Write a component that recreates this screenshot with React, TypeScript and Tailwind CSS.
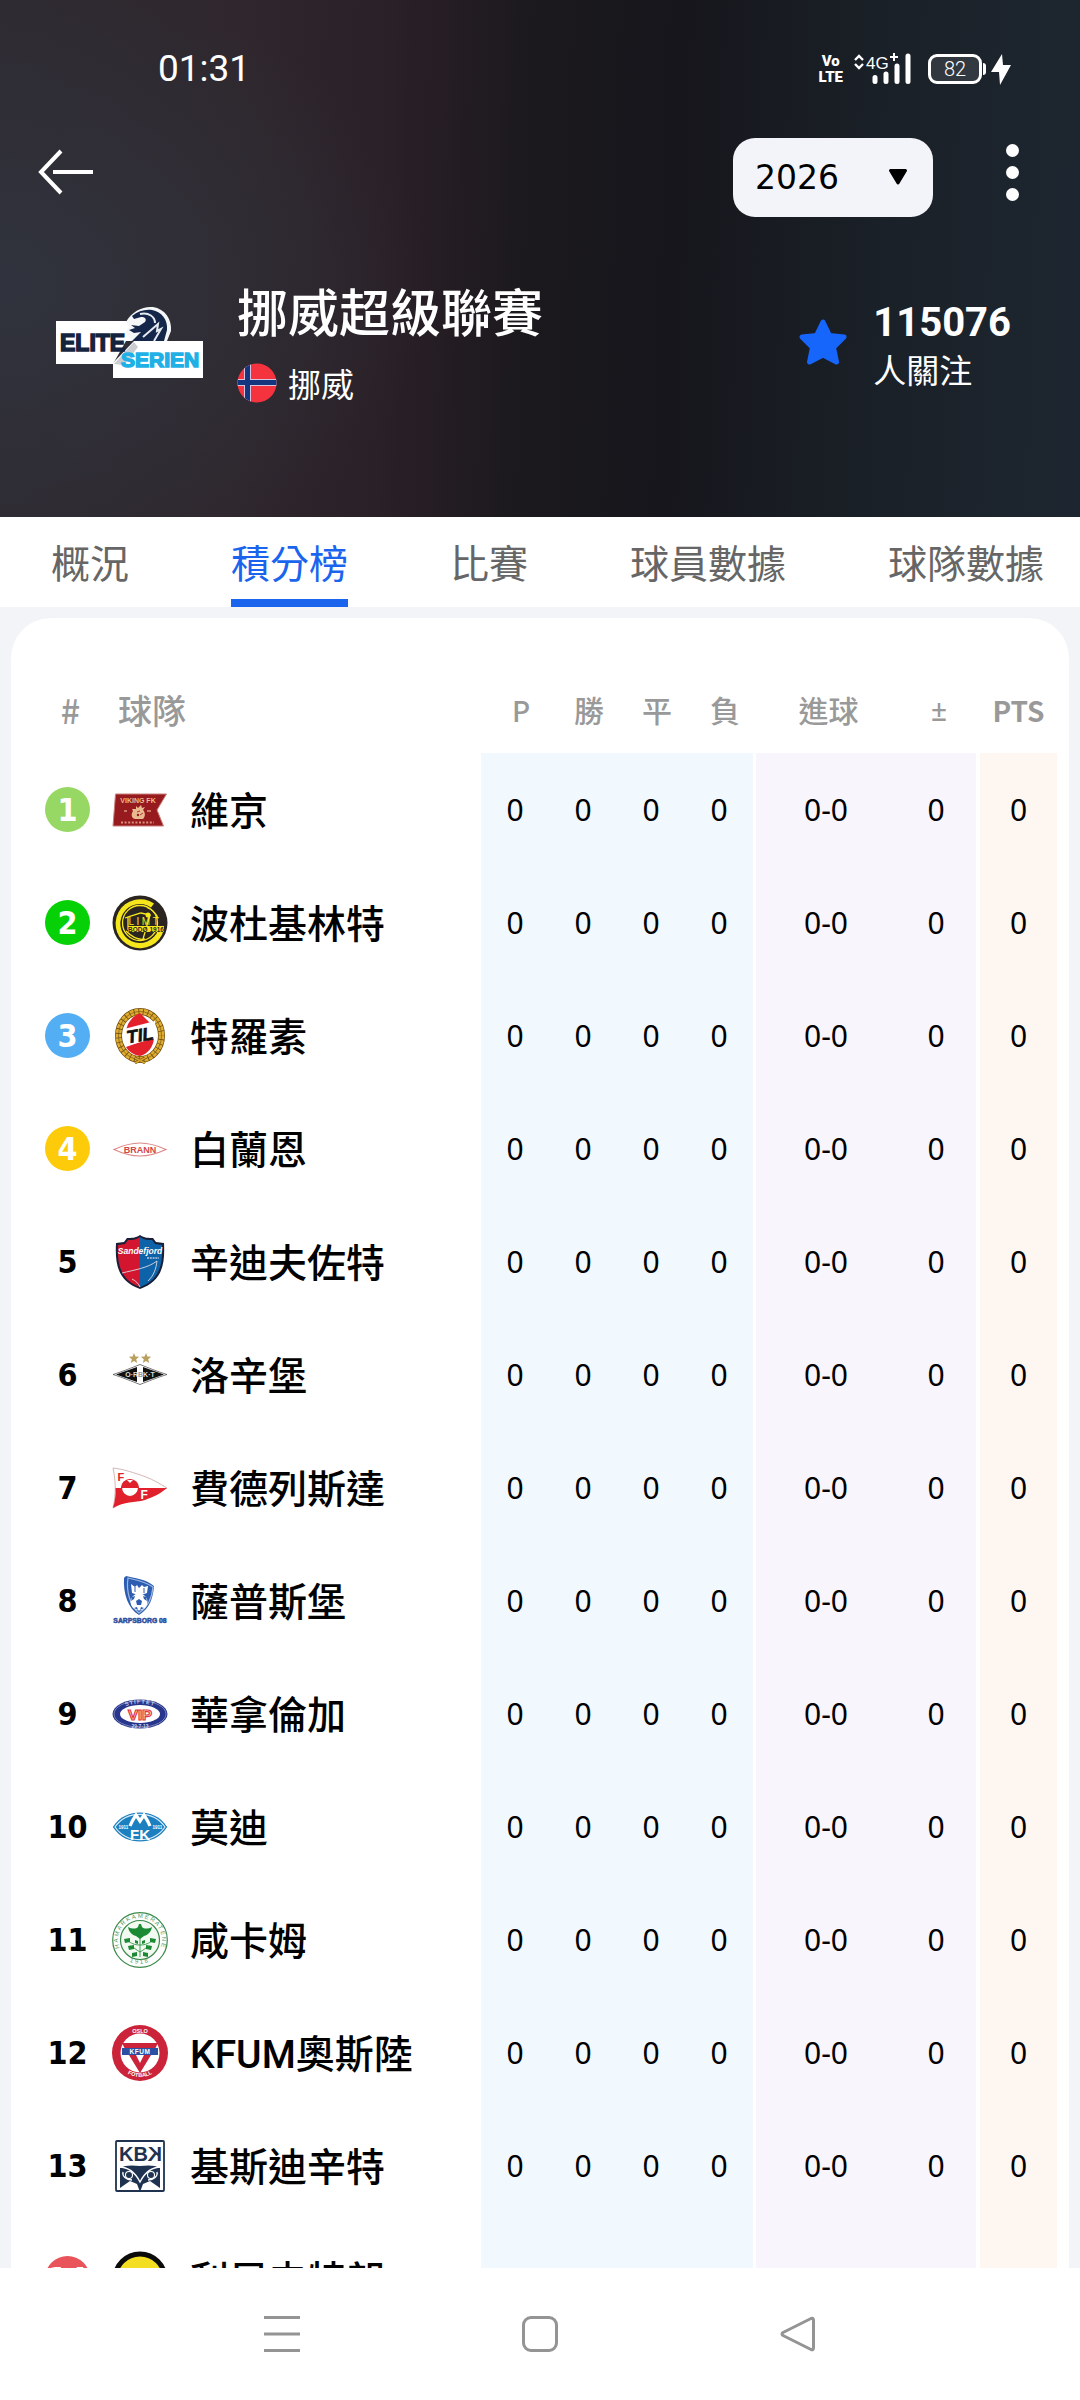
import { useState } from 'react';
import type { ReactNode } from 'react';

interface Team {
  rank: number;
  name: string;
  badge?: string;
  Logo: () => ReactNode;
}

const TABS = ['概況', '積分榜', '比賽', '球員數據', '球隊數據'];

const SVG_FONT = '"Liberation Sans", sans-serif';

/* ---------- club logos, all on a 56x56 grid ---------- */

function VikingLogo() {
  return (
    <svg viewBox="0 0 56 56" className="size-14" aria-hidden="true">
      <path d="M3.500 12H54.500L45 28l6.500 16H1Z" fill="#971b1e" stroke="#c9807a" strokeWidth="1" />
      <text x="26" y="20.500" textAnchor="middle" fontSize="7" fontWeight="bold" fill="#e9b98f" fontFamily={SVG_FONT}>VIKING FK</text>
      <path d="M24 24l2 2 3-3 1 3 3-1-2 3c2 2 3 6 0 9h-8c-4-1-4-5-2-8l-1-2h4Z" fill="#e9b98f" />
      <circle cx="26" cy="33" r="1.200" fill="#971b1e" />
      <path d="M28 33l3-2M25 30l3-1" stroke="#971b1e" strokeWidth="0.800" />
      <path d="M12 29h3M35 29h4" stroke="#d9927a" strokeWidth="1.500" />
      <path d="M9 40.500h33" stroke="#d9927a" strokeWidth="1.800" strokeDasharray="2 1.600" />
    </svg>
  );
}

function BodoGlimtLogo() {
  return (
    <svg viewBox="0 0 56 56" className="size-14" aria-hidden="true">
      <circle cx="28" cy="28" r="27.500" fill="#2b2522" />
      <path d="M42 8.500A24.500 24.500 0 1 0 51.800 35h-5.600A19.500 19.500 0 1 1 39 12.500Z" fill="#f6e71d" />
      <circle cx="28" cy="28" r="17.500" fill="none" stroke="#f6e71d" strokeWidth="1.300" />
      <path d="M13 23l16-5 9 2-7 24M14 36c8 8 14 9 19 8M35 12.500c8 3 10 8 11 11M28 18l-12 4v13" fill="none" stroke="#f6e71d" strokeWidth="1.300" />
      <path d="M16 31h36v6H16Z" fill="#f6e71d" />
      <text x="16.500" y="30" fontSize="10" fill="#f6e71d" letterSpacing="2.500" fontFamily={SVG_FONT}>LIMT</text>
      <circle cx="36" cy="20" r="2.500" fill="#f6e71d" />
      <text x="34" y="36.500" textAnchor="middle" fontSize="6.500" fontWeight="bold" fill="#2b2522" fontFamily={SVG_FONT}>BODØ 1916</text>
    </svg>
  );
}

function TromsoLogo() {
  return (
    <svg viewBox="0 0 56 56" className="size-14" aria-hidden="true">
      <ellipse cx="28" cy="27.500" rx="21.500" ry="24" fill="#fff" stroke="#6b4c12" strokeWidth="7" />
      <ellipse cx="28" cy="27.500" rx="21.500" ry="24" fill="none" stroke="#e0ad30" strokeWidth="5.600" strokeDasharray="3.800 0.800" />
      <ellipse cx="28" cy="27.500" rx="21.500" ry="24" fill="none" stroke="#7a5914" strokeWidth="0.700" />
      <path d="M28 5 43 20 14 28C13 17 20 8 28 5Z" fill="#e4202b" />
      <path d="M14 39 42 29c0 9-6 17-14 19-6-1-11-4-14-9Z" fill="#e4202b" />
      <path d="M12 21 43 13l1 17-30 8Z" fill="#fff" />
      <text x="28" y="33.500" textAnchor="middle" fontSize="18" fontWeight="bold" fontStyle="italic" fill="#111" stroke="#111" strokeWidth="0.600" fontFamily={SVG_FONT} transform="rotate(-9 28 28)">TIL</text>
      <path d="M23 50l10 5M33 50l-10 5" stroke="#6b4c12" strokeWidth="2.600" />
      <path d="M23 50l10 5M33 50l-10 5" stroke="#dba62a" strokeWidth="1.400" />
    </svg>
  );
}

function BrannLogo() {
  return (
    <svg viewBox="0 0 56 56" className="size-14" aria-hidden="true">
      <path d="M2 28.500C14 23 20 22 28 22s14 1 26 6.500C42 34 36 35 28 35S14 34 2 28.500Z" fill="#fff" stroke="#dd8787" strokeWidth="1.200" />
      <text x="28" y="31.500" textAnchor="middle" fontSize="9" fontWeight="bold" fill="#d04848" fontFamily={SVG_FONT}>BRANN</text>
    </svg>
  );
}

function SandefjordLogo() {
  return (
    <svg viewBox="0 0 56 56" className="size-14" aria-hidden="true">
      <path d="M28 1c4 3 9 3 13 3l3 4 8 1c1 20-1 38-24 46C5 47 3 29 4 9l8-1 3-4c4 0 9 0 13-3Z" fill="#182038" />
      <path d="M28 3v50C8 46 5 29 6 11l7-1 3-4c4 0 8 0 12-3Z" fill="#d3152f" />
      <path d="M28 3c4 3 8 3 12 3l3 4 7 1c1 18-2 35-22 42Z" fill="#0e62a8" />
      <path d="M10 39c12-3 26-5 35-12-1 8-3 14-9 20M20 45c4 2 6 4 8 8" fill="none" stroke="#d9dce8" strokeWidth="0.900" />
      <text x="28" y="20" textAnchor="middle" fontSize="8.500" fontWeight="bold" fontStyle="italic" fill="#fff" fontFamily={SVG_FONT}>Sandefjord</text>
      <path d="M35 24h12" stroke="#b6c9de" strokeWidth="1.600" strokeDasharray="2 0.800" />
    </svg>
  );
}

function RosenborgLogo() {
  return (
    <svg viewBox="0 0 56 56" className="size-14" aria-hidden="true">
      <path d="M22 6l1.400 3.600 3.800.2-3 2.400 1 3.800-3.200-2.100-3.200 2.100 1-3.800-3-2.400 3.800-.2ZM34 6l1.400 3.600 3.800.2-3 2.400 1 3.800-3.200-2.100-3.200 2.100 1-3.800-3-2.400 3.800-.2Z" fill="#b9a05e" />
      <path d="M1 27.500C12 24 19 21 28 17.500 37 21 44 24 55 27.500 44 31 37 34 28 37.500 19 34 12 31 1 27.500Z" fill="#fff" stroke="#555" strokeWidth="0.800" />
      <path d="M4 27.500l21-7.500v15ZM52 27.500 31 20v15Z" fill="#111" />
      <text x="28" y="30" textAnchor="middle" fontSize="7" fontWeight="bold" fill="#999" fontFamily={SVG_FONT}>
        <tspan fill="#ddd">O·R</tspan>B<tspan fill="#ddd">K·T</tspan>
      </text>
    </svg>
  );
}

function FredrikstadLogo() {
  return (
    <svg viewBox="0 0 56 56" className="size-14" aria-hidden="true">
      <path d="M1 8c10 1 22 5 33 9 8 3 14 7 21 11-14 4-36 9-54 20 3-14 3-26 0-40Z" fill="#fff" stroke="#c9a5a5" strokeWidth="0.800" />
      <path d="M3.500 28H55c-7 6-14 9-22 12-11 3-20 1-32 8 2-7 3-13 2.500-20Z" fill="#e0202c" />
      <circle cx="18" cy="28" r="8.500" fill="#fff" stroke="#e0202c" strokeWidth="1.200" />
      <path d="M9.500 28a8.500 8.500 0 0 1 17 0Z" fill="#e0202c" />
      <path d="M18 23l3-3h-6Z" fill="#fff" />
      <text x="5.500" y="21" fontSize="11" fontWeight="bold" fill="#e0202c" fontFamily={SVG_FONT}>F</text>
      <text x="28.500" y="38.500" fontSize="12" fontWeight="bold" fill="#fff" fontFamily={SVG_FONT}>F</text>
    </svg>
  );
}

function SarpsborgLogo() {
  return (
    <svg viewBox="0 0 56 56" className="size-14" aria-hidden="true">
      <path d="M14 3c8 2 20 3 28 10-1 12-4 22-15 29C16 36 11 20 12 5Z" fill="#2d5db0" />
      <path d="M16 5c9 2 18 4 25 9-1 11-5 20-14 26C18 33 14 18 16 5Z" fill="none" stroke="#9db8e2" strokeWidth="1.200" />
      <path d="M19 11l4 3 2-2 2 3 3-3 2 2 4-1-1 7c-5 2-10 2-15 0Z" fill="#fff" />
      <path d="M23 14v5M32 15v5" stroke="#2d5db0" strokeWidth="1" />
      <circle cx="27" cy="29" r="8.500" fill="#fff" />
      <path d="M27 26l3 2-1 4h-4l-1-4ZM20 24l3-1-1 3-3 2ZM34 24l-3-1 1 3 3 2ZM22 35l3-1 1 3ZM32 35l-3-1-1 3Z" fill="#2d5db0" />
      <text x="28" y="50" textAnchor="middle" fontSize="6.800" fontWeight="bold" fill="#2d4f9e" stroke="#2d4f9e" strokeWidth="0.500" fontFamily={SVG_FONT}>SARPSBORG 08</text>
    </svg>
  );
}

function ValerengaLogo() {
  return (
    <svg viewBox="0 0 56 56" className="size-14" aria-hidden="true">
      <defs>
        <path id="vif-top" d="M9 25C13 15 43 15 47 25" />
      </defs>
      <ellipse cx="28" cy="28" rx="27.500" ry="14.500" fill="#27368c" />
      <ellipse cx="28" cy="28" rx="26" ry="13.200" fill="none" stroke="#aeb6d8" strokeWidth="0.600" />
      <ellipse cx="28" cy="28" rx="20" ry="9" fill="#fff" />
      <text fontSize="5.500" fontWeight="bold" fill="#c9cfe8" letterSpacing="1" fontFamily={SVG_FONT}>
        <textPath href="#vif-top" startOffset="50%" textAnchor="middle">STIFTET</textPath>
      </text>
      <text x="28" y="33.500" textAnchor="middle" fontSize="15" fontWeight="bold" fill="#fbe3e3" stroke="#e0383f" strokeWidth="1.200" fontFamily={SVG_FONT}>VIP</text>
      <text x="28" y="41.500" textAnchor="middle" fontSize="5" fontWeight="bold" fill="#c9cfe8" fontFamily={SVG_FONT}>29·7·13</text>
    </svg>
  );
}

function MoldeLogo() {
  return (
    <svg viewBox="0 0 56 56" className="size-14" aria-hidden="true">
      <path d="M.8 28C8 17 18 13.500 28 13.500S48 17 55.200 28C48 39 38 42.500 28 42.500S8 39 .8 28Z" fill="#1c7fc0" />
      <path d="M3 28C9.500 18.500 19 15.300 28 15.300S46.500 18.500 53 28C46.500 37.500 37 40.700 28 40.700S9.500 37.500 3 28Z" fill="none" stroke="#d7ecf8" strokeWidth="1.200" />
      <path d="M18 27c2-5 4-8 6-11l4 6 4-6c2 3 4 6 6 11" fill="none" stroke="#fff" strokeWidth="3.200" />
      <text x="28" y="41" textAnchor="middle" fontSize="15" fontWeight="bold" fill="#fff" fontFamily={SVG_FONT}>FK</text>
      <text x="6.500" y="30" fontSize="4.500" fontWeight="bold" fill="#fff" fontFamily={SVG_FONT}>1911</text>
      <text x="40.500" y="30" fontSize="4.500" fontWeight="bold" fill="#fff" fontFamily={SVG_FONT}>1911</text>
    </svg>
  );
}

function HamKamLogo() {
  return (
    <svg viewBox="0 0 56 56" className="size-14" aria-hidden="true">
      <defs>
        <path id="hk-ring" d="M13.500 44.500A22 22 0 1 1 42.500 44.500" />
        <path id="hk-year" d="M14 47.500A25 25 0 0 0 42 47.500" />
      </defs>
      <circle cx="28" cy="28" r="27.300" fill="#fff" stroke="#3c8a4c" strokeWidth="1.200" />
      <circle cx="28" cy="28" r="19.500" fill="#f1f9f0" stroke="#3c8a4c" strokeWidth="1.200" />
      <text fontSize="6" fill="#4f9a5c" letterSpacing="1.500" fontFamily={SVG_FONT}>
        <textPath href="#hk-ring" startOffset="50%" textAnchor="middle">HAMARKAMERATENE</textPath>
      </text>
      <text fontSize="6" fill="#4f9a5c" letterSpacing="2" fontFamily={SVG_FONT}>
        <textPath href="#hk-year" startOffset="50%" textAnchor="middle">1918</textPath>
      </text>
      <path d="M16 15c4 2 8 2 10 0l1-3h2l1 3c2 2 6 2 10 0-1 5-4 8-8 9l-4 3-4-3c-4-1-7-4-8-9Z" fill="#1c8a35" />
      <path d="M28 26v19M28 33c-6 0-9-2-12-4M28 33c6 0 9-2 12-4M28 40c-4-2-6-5-10-6M28 40c4-2 6-5 10-6" fill="none" stroke="#1c8a35" strokeWidth="0.800" />
      <path d="M12 27l6-1v4l-5 1ZM44 27l-6-1v4l5 1ZM16 34l6-1v4l-5 1ZM40 34l-6-1v4l5 1ZM20 41l5-1v4l-5 1ZM36 41l-5-1v4l5 1ZM23 28l3 1v3l-3-1ZM33 28l-3 1v3l3-1Z" fill="#1c8a35" />
    </svg>
  );
}

function KfumLogo() {
  return (
    <svg viewBox="0 0 56 56" className="size-14" aria-hidden="true">
      <defs>
        <path id="kfum-bottom" d="M8 42A25 25 0 0 0 48 42" />
      </defs>
      <circle cx="28" cy="28" r="28" fill="#cb2339" />
      <circle cx="28" cy="28" r="19.500" fill="#fff" />
      <path d="M10 18h36l-3 6H13ZM17 30h7l4 8 4-8h7L28 48Z" fill="#cb2339" />
      <path d="M10 23h36v7H10Z" fill="#2b4fa2" />
      <text x="28" y="29" textAnchor="middle" fontSize="6.500" fontWeight="bold" fill="#fff" letterSpacing="0.500" fontFamily={SVG_FONT}>KFUM</text>
      <text x="28" y="7.500" textAnchor="middle" fontSize="5.500" fontWeight="bold" fill="#fff" fontFamily={SVG_FONT}>OSLO</text>
      <text fontSize="5.500" fontWeight="bold" fill="#fff" fontFamily={SVG_FONT}>
        <textPath href="#kfum-bottom" startOffset="50%" textAnchor="middle">FOTBALL</textPath>
      </text>
    </svg>
  );
}

function KristiansundLogo() {
  return (
    <svg viewBox="0 0 56 56" className="size-14" aria-hidden="true">
      <rect x="4" y="3" width="48" height="50" rx="1" fill="#fff" stroke="#1f3350" strokeWidth="1.800" />
      <text x="7" y="22.500" fontSize="20" fontWeight="bold" fill="#1f3350" fontFamily={SVG_FONT}>KB</text>
      {/* the last K is mirrored */}
      <g transform="translate(50 0) scale(-1 1)">
        <text x="0" y="22.500" fontSize="20" fontWeight="bold" fill="#1f3350" fontFamily={SVG_FONT}>K</text>
      </g>
      <path d="M8 30c5-3 12-3 20-2 8-1 15-1 20 2v20l-10-7-7 3-3 8-3-8-7-3-10 7Z" fill="#1f3350" />
      <path d="M7 29c9 0 16 5 21 15 5-10 12-15 21-15" fill="none" stroke="#fff" strokeWidth="1.400" />
      <path d="M11 34c-1 4 3 8 9 8M45 34c1 4-3 8-9 8" fill="none" stroke="#fff" strokeWidth="1.300" />
      <circle cx="17" cy="37" r="3.500" fill="none" stroke="#fff" strokeWidth="1.100" />
      <circle cx="39" cy="37" r="3.500" fill="none" stroke="#fff" strokeWidth="1.100" />
      <path d="M9 51l9-7 7 7ZM47 51l-9-7-7 7Z" fill="#fff" />
    </svg>
  );
}

function LillestromLogo() {
  return (
    <svg viewBox="0 0 56 56" className="size-14" aria-hidden="true">
      <circle cx="28" cy="28" r="25" fill="#f3de22" stroke="#0b0b0b" strokeWidth="5" />
    </svg>
  );
}

const TEAMS: Team[] = [
  { rank: 1, name: '維京', badge: 'bg-[#96d863]', Logo: VikingLogo },
  { rank: 2, name: '波杜基林特', badge: 'bg-[#06d006]', Logo: BodoGlimtLogo },
  { rank: 3, name: '特羅素', badge: 'bg-[#54aef3]', Logo: TromsoLogo },
  { rank: 4, name: '白蘭恩', badge: 'bg-[#fdcb0a]', Logo: BrannLogo },
  { rank: 5, name: '辛迪夫佐特', Logo: SandefjordLogo },
  { rank: 6, name: '洛辛堡', Logo: RosenborgLogo },
  { rank: 7, name: '費德列斯達', Logo: FredrikstadLogo },
  { rank: 8, name: '薩普斯堡', Logo: SarpsborgLogo },
  { rank: 9, name: '華拿倫加', Logo: ValerengaLogo },
  { rank: 10, name: '莫迪', Logo: MoldeLogo },
  { rank: 11, name: '咸卡姆', Logo: HamKamLogo },
  { rank: 12, name: 'KFUM奧斯陸', Logo: KfumLogo },
  { rank: 13, name: '基斯迪辛特', Logo: KristiansundLogo },
  { rank: 14, name: '利尼史特朗', badge: 'bg-[#e8545a]', Logo: LillestromLogo },
];

/* ---------- header ---------- */

function EliteserienLogo() {
  return (
    <svg viewBox="0 0 147 73" className="h-[73px] w-[147px] shrink-0" role="img" aria-label="Eliteserien">
      <path d="M0 15h72l4 20h-6L57 58H0Z" fill="#fff" />
      <path d="M57 57 78 35h69v37H57Z" fill="#fff" />
      <path d="M58 58 78 36l4 5-14 18Z" fill="#c9cdd2" />
      {/* lion head */}
      <path d="M70 16C76 5 87 0 97 1c12 2 19 12 18 24l-4 10H76l-7-8 4-6Z" fill="#f4f6f8" />
      <path d="M76 10C82 5 89 3 96 4c10 2 16 10 15 20l-3 11H76l9-9-7 1-5-3 6-2-4-3 8 1 6-4c2-3 0-5-4-5l-7 2Z" fill="#14264a" />
      <path d="M84 8c9-2 15 3 15 9M87 31l15-13-1 7 4-2-7 12" fill="none" stroke="#e4e9ef" strokeWidth="2" />
      <text x="4" y="45" fontSize="23" fontWeight="bold" fill="#14243f" stroke="#14243f" strokeWidth="1.500" fontFamily={SVG_FONT}>ELITE</text>
      <text x="65" y="61" fontSize="21" fontWeight="bold" fill="#1fb0e6" stroke="#1fb0e6" strokeWidth="1.500" fontFamily={SVG_FONT}>SERIEN</text>
    </svg>
  );
}

function NorwayFlag() {
  return (
    <svg viewBox="0 0 40 40" className="size-10 shrink-0" aria-hidden="true">
      <defs>
        <clipPath id="flag-round">
          <circle cx="20" cy="20" r="19.500" />
        </clipPath>
      </defs>
      <g clipPath="url(#flag-round)">
        <rect width="40" height="40" fill="#f5333f" />
        <path d="M7 0h7v40H7ZM0 16h40v7H0Z" fill="#d9c3dc" />
        <path d="M8 0h5v40H8ZM0 17h40v5H0Z" fill="#16357f" />
      </g>
    </svg>
  );
}

function StatusBar() {
  return (
    <div className="flex h-[138px] items-center justify-between pr-[69px] pl-[158px] text-white">
      <time className="font-[Roboto,sans-serif] text-[37px]">01:31</time>
      <div className="flex items-center">
        <div className="flex flex-col items-center font-[Roboto,sans-serif] text-[15px] leading-4 font-black">
          <span>Vo</span>
          <span>LTE</span>
        </div>
        <svg viewBox="0 0 58 32" className="ml-[10px] h-8 w-[58px]" fill="none" stroke="#fff" aria-label="4G+">
          <path d="M2 7l4-4 4 4M2 11l4 4 4-4" strokeWidth="2.400" />
          <text x="13" y="15.500" fontSize="17" fill="#fff" stroke="none" fontFamily={SVG_FONT}>4G</text>
          <path d="M41 0v8M37 4h8" strokeWidth="2" />
          <path d="M22 24.500v4M33 21v7.500M44 13v15.500M55 3v25.500" strokeWidth="5" strokeLinecap="round" />
        </svg>
        <div className="ml-[17px] flex h-[30px] w-[54px] items-center justify-center rounded-[9px] border-[3px] border-white bg-white/10 font-[Roboto,sans-serif] text-[20px] font-light">
          82
        </div>
        <span className="ml-px h-3 w-[3px] rounded-r bg-white" />
        <svg viewBox="0 0 20 31" className="ml-[5px] h-[31px] w-5" fill="#fff" aria-hidden="true">
          <path d="M11 0 0 18h8l1 13 11-20h-8Z" />
        </svg>
      </div>
    </div>
  );
}

function Header() {
  const [season, setSeason] = useState('2026');

  return (
    <header className="shrink-0 bg-[radial-gradient(ellipse_40%_60%_at_0%_55%,#30333d_0%,transparent_100%),linear-gradient(92deg,#2e2a31_0%,#2f272d_22%,#2a2027_36%,#1b191d_49%,#16161c_62%,#1a2027_80%,#1d2630_100%)] pb-[114px]">
      <StatusBar />

      <div className="flex items-start justify-between pr-[57px] pl-[36px]">
        <button type="button" aria-label="返回" className="flex h-[68px] items-center">
          <svg viewBox="0 0 60 46" className="h-[46px] w-[60px]" fill="none" stroke="#fff" strokeWidth="4" aria-hidden="true">
            <path d="M25 2 5 23l20 21M17 23h40" />
          </svg>
        </button>

        <div className="flex items-start">
          <div className="relative">
            <select
              aria-label="賽季"
              value={season}
              onChange={(e) => setSeason(e.target.value)}
              className="h-[79px] w-[200px] appearance-none rounded-[22px] bg-[#f3f4f9] pl-[22px] font-['DejaVu_Sans',sans-serif] text-[33px] text-black"
            >
              <option>2026</option>
              <option>2025</option>
            </select>
            <svg viewBox="0 0 20 18" className="pointer-events-none absolute top-[30px] right-[25px] h-[18px] w-5" aria-hidden="true">
              <path d="M2.500 2.500h15L10 15Z" fill="#000" stroke="#000" strokeWidth="3" strokeLinejoin="round" />
            </svg>
          </div>
          <button type="button" aria-label="更多" className="ml-[68px] flex h-[68px] w-[22px] flex-col items-center justify-center gap-[9px]">
            <span className="size-[13px] rounded-full bg-white" />
            <span className="size-[13px] rounded-full bg-white" />
            <span className="size-[13px] rounded-full bg-white" />
          </button>
        </div>
      </div>

      <div className="mt-16 flex items-center pr-[69px] pl-14 text-white">
        <EliteserienLogo />
        <div className="ml-[34px] flex-1">
          <h1 className="text-[51px] leading-[58px] font-medium">挪威超級聯賽</h1>
          <div className="mt-6 flex items-center gap-[11px]">
            <NorwayFlag />
            <span className="text-[33px] leading-10">挪威</span>
          </div>
        </div>
        <button type="button" className="flex items-center gap-[25px] text-left">
          <svg viewBox="0 0 50 48" className="h-12 w-[50px]" aria-hidden="true">
            <path
              d="M25 4l6.500 13.500L46 19 35.500 29.500 38.500 44 25 37 11.500 44l3-14.500L4 19l14.500-1.500Z"
              fill="#1766fb"
              stroke="#1766fb"
              strokeWidth="5"
              strokeLinejoin="round"
            />
          </svg>
          <span className="flex flex-col pt-2 leading-[46px]">
            <span className="font-[Roboto,sans-serif] text-[40px] font-bold">115076</span>
            <span className="text-[33px]">人關注</span>
          </span>
        </button>
      </div>
    </header>
  );
}

function Tabs() {
  const [active, setActive] = useState('積分榜');

  return (
    <nav className="flex h-[90px] shrink-0 justify-between bg-white pr-9 pl-[51px]">
      {TABS.map((tab) => (
        <button
          key={tab}
          type="button"
          onClick={() => setActive(tab)}
          className={`border-t-[6px] border-b-8 border-t-transparent text-[39px] ${
            tab === active ? 'border-b-[#1a64ee] text-[#1a64ee]' : 'border-b-transparent text-[#666]'
          }`}
        >
          {tab}
        </button>
      ))}
    </nav>
  );
}

/* ---------- standings ---------- */

const BLUE = 'bg-[#f1f9ff]';
const PURPLE = 'bg-[#f9f5fc]';
const ORANGE = 'bg-[#fef6f0]';

function StandingsTable() {
  return (
    <table className="w-full table-fixed border-separate border-spacing-0">
      <colgroup>
        <col className="w-[101px]" />
        <col />
        <col className="w-[68px]" />
        <col className="w-[68px]" />
        <col className="w-[68px]" />
        <col className="w-[68px]" />
        <col className="w-[143px]" />
        <col className="w-[80px]" />
        <col className="w-[81px]" />
      </colgroup>
      <thead>
        <tr className="h-[135px] text-[30px] text-[#999]">
          <th className="pt-12 pl-[37px] text-[34px] font-medium">
            <span className="block w-[45px] text-center">#</span>
          </th>
          <th className="pt-12 pl-1.5 text-left text-[34px] font-medium">球隊</th>
          <th className="pt-12 pl-3 text-[28px] font-medium">P</th>
          <th className="pt-12 pl-3 font-medium">勝</th>
          <th className="pt-12 pl-3 font-medium">平</th>
          <th className="pt-12 pl-3 font-medium">負</th>
          <th className="pt-12 pl-2 font-medium">進球</th>
          <th className="pt-12 pl-1.5 font-['Noto_Sans',sans-serif] text-[28px] font-medium">±</th>
          <th className="pt-12 pl-1 text-[28px] font-bold">PTS</th>
        </tr>
      </thead>
      <tbody>
        {TEAMS.map(({ rank, name, badge, Logo }) => (
          <tr key={rank} className="h-[113px] text-center font-['Noto_Sans',sans-serif] text-[30px] text-black">
            <td className="pl-[34px]">
              <span
                className={`flex size-[45px] items-center justify-center rounded-full font-['DejaVu_Sans_Condensed','Noto_Sans',sans-serif] text-[32px] font-bold ${
                  badge ? `${badge} text-white` : ''
                }`}
              >
                {rank}
              </span>
            </td>
            <td>
              <div className="flex items-center gap-[22px]">
                <Logo />
                <span className="pt-1 font-[Roboto,'Noto_Sans_CJK_TC',sans-serif] text-[39px] leading-[48px] font-medium whitespace-nowrap">{name}</span>
              </div>
            </td>
            <td className={BLUE}>0</td>
            <td className={BLUE}>0</td>
            <td className={BLUE}>0</td>
            <td className={BLUE}>0</td>
            <td className={`border-l-[3px] border-white ${PURPLE}`}>0-0</td>
            <td className={PURPLE}>0</td>
            <td className={`border-l-4 border-white ${ORANGE}`}>0</td>
          </tr>
        ))}
      </tbody>
    </table>
  );
}

function SystemNav() {
  return (
    <nav className="grid h-[132px] shrink-0 grid-cols-3 bg-white px-[153px]">
      <button type="button" aria-label="最近" className="flex items-center justify-center">
        <svg viewBox="0 0 36 36" className="size-9" stroke="#949494" strokeWidth="3" aria-hidden="true">
          <path d="M0 1.500h36M0 18h36M0 34.500h36" />
        </svg>
      </button>
      <button type="button" aria-label="主畫面" className="flex items-center justify-center">
        <span className="size-9 rounded-[9px] border-[3px] border-[#949494]" />
      </button>
      <button type="button" aria-label="返回上一頁" className="flex items-center justify-center">
        <svg viewBox="0 0 36 36" className="size-9" fill="none" stroke="#949494" strokeWidth="3" aria-hidden="true">
          <path d="M31 2.500 3 16.500q-2 1.500 0 3L31 33.500q2.500 1 2.500-2v-27q0-3-2.500-2Z" strokeLinejoin="round" />
        </svg>
      </button>
    </nav>
  );
}

export default function App() {
  return (
    <div className="flex h-screen flex-col bg-[#f3f4f8] font-['Noto_Sans_CJK_TC',sans-serif]">
      <Header />
      <Tabs />
      <main className="min-h-0 flex-1 overflow-hidden pt-[11px]">
        <section className="mx-[11px] rounded-t-[40px] bg-white pr-3">
          <StandingsTable />
        </section>
      </main>
      <SystemNav />
    </div>
  );
}
